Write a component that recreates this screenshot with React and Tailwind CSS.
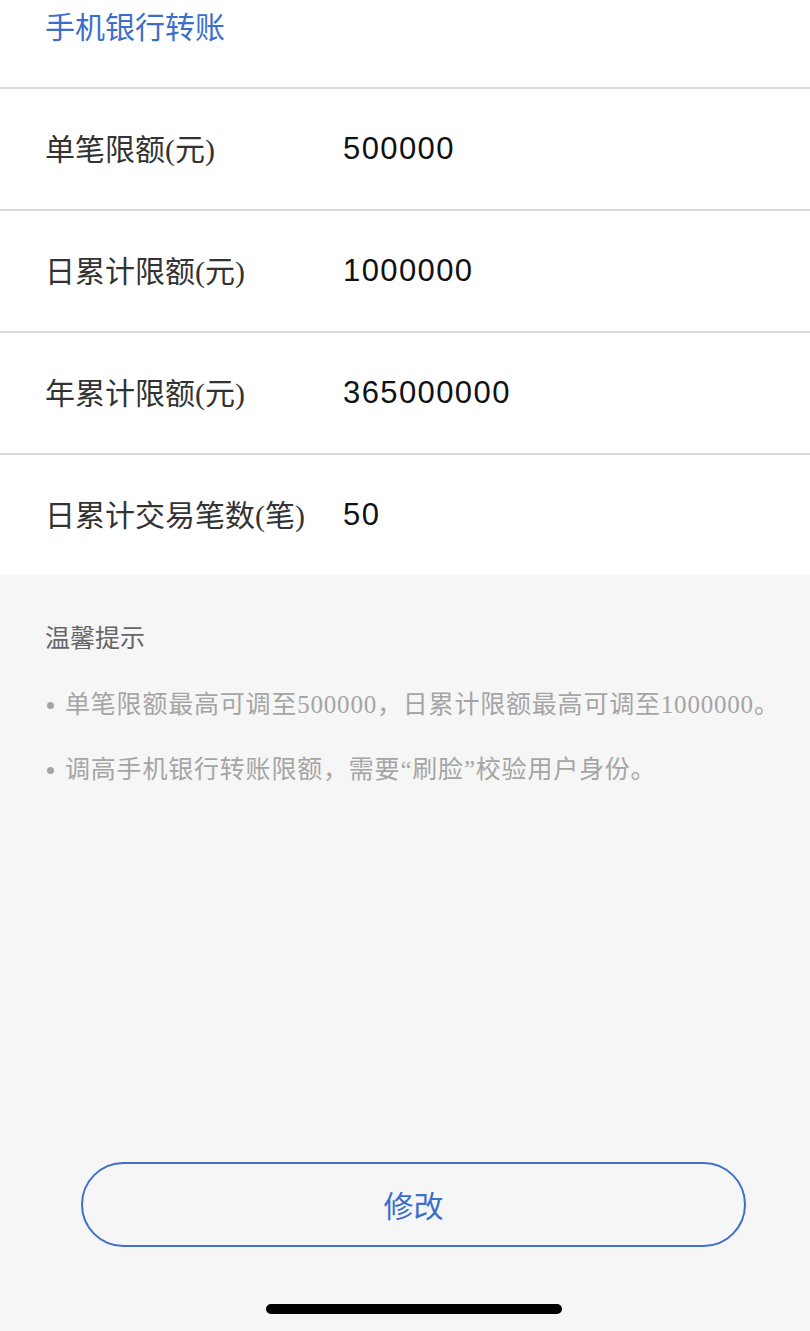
export default function App() {
  const rows = [
    { label: '单笔限额(元)', value: '500000' },
    { label: '日累计限额(元)', value: '1000000' },
    { label: '年累计限额(元)', value: '365000000' },
    { label: '日累计交易笔数(笔)', value: '50' },
  ];

  const tips = [
    '单笔限额最高可调至500000，日累计限额最高可调至1000000。',
    '调高手机银行转账限额，需要“刷脸”校验用户身份。',
  ];

  const serifCjk = { fontFamily: "'Liberation Serif', 'Noto Sans CJK SC', serif" };

  return (
    <div className="min-h-[1331px] w-[810px] bg-[#f6f6f6] flex flex-col font-['Noto_Sans_CJK_SC',sans-serif]">
      <div className="bg-white h-[89px] pl-[45px] pt-[3px] border-b-2 border-[#dcdcdc]">
        <div className="text-[30px] leading-[45px] text-[#3c6ecc]">手机银行转账</div>
      </div>

      <div className="bg-white">
        {rows.map((row, i) => (
          <div
            key={i}
            className={`h-[120px] flex items-center pl-[45px] ${i < rows.length - 1 ? 'border-b-2 border-[#dcdcdc] box-content' : ''}`}
          >
            <div className="w-[298px] text-[30px] text-[#333333]" style={serifCjk}>
              {row.label}
            </div>
            <div className="text-[31px] tracking-[1.4px] text-[#111111] font-['Liberation_Sans',sans-serif]">
              {row.value}
            </div>
          </div>
        ))}
      </div>

      <div className="pl-[45px] pt-[46px]">
        <div className="text-[25px] leading-[30px] text-[#666666]">温馨提示</div>
        <div className="mt-[34px] flex flex-col gap-[25px]">
          {tips.map((t, i) => (
            <div key={i} className="flex items-center h-[40px] text-[25px] text-[#a5a5a5]" style={serifCjk}>
              <span className="w-[7px] h-[7px] rounded-full bg-[#a5a5a5] mr-[11px] ml-[2px] shrink-0" />
              <span className="whitespace-nowrap tracking-[0.8px]">{t}</span>
            </div>
          ))}
        </div>
      </div>

      <div className="flex-1" />

      <div className="pl-[81px]">
        <button className="w-[665px] h-[85px] rounded-full border-2 border-[#3f6fc9] text-[30px] text-[#3c6ecc] flex items-center justify-center">
          修改
        </button>
      </div>

      <div className="h-[84px] pl-[266px] pt-[57px]">
        <div className="w-[296px] h-[10px] rounded-full bg-black" />
      </div>
    </div>
  );
}
